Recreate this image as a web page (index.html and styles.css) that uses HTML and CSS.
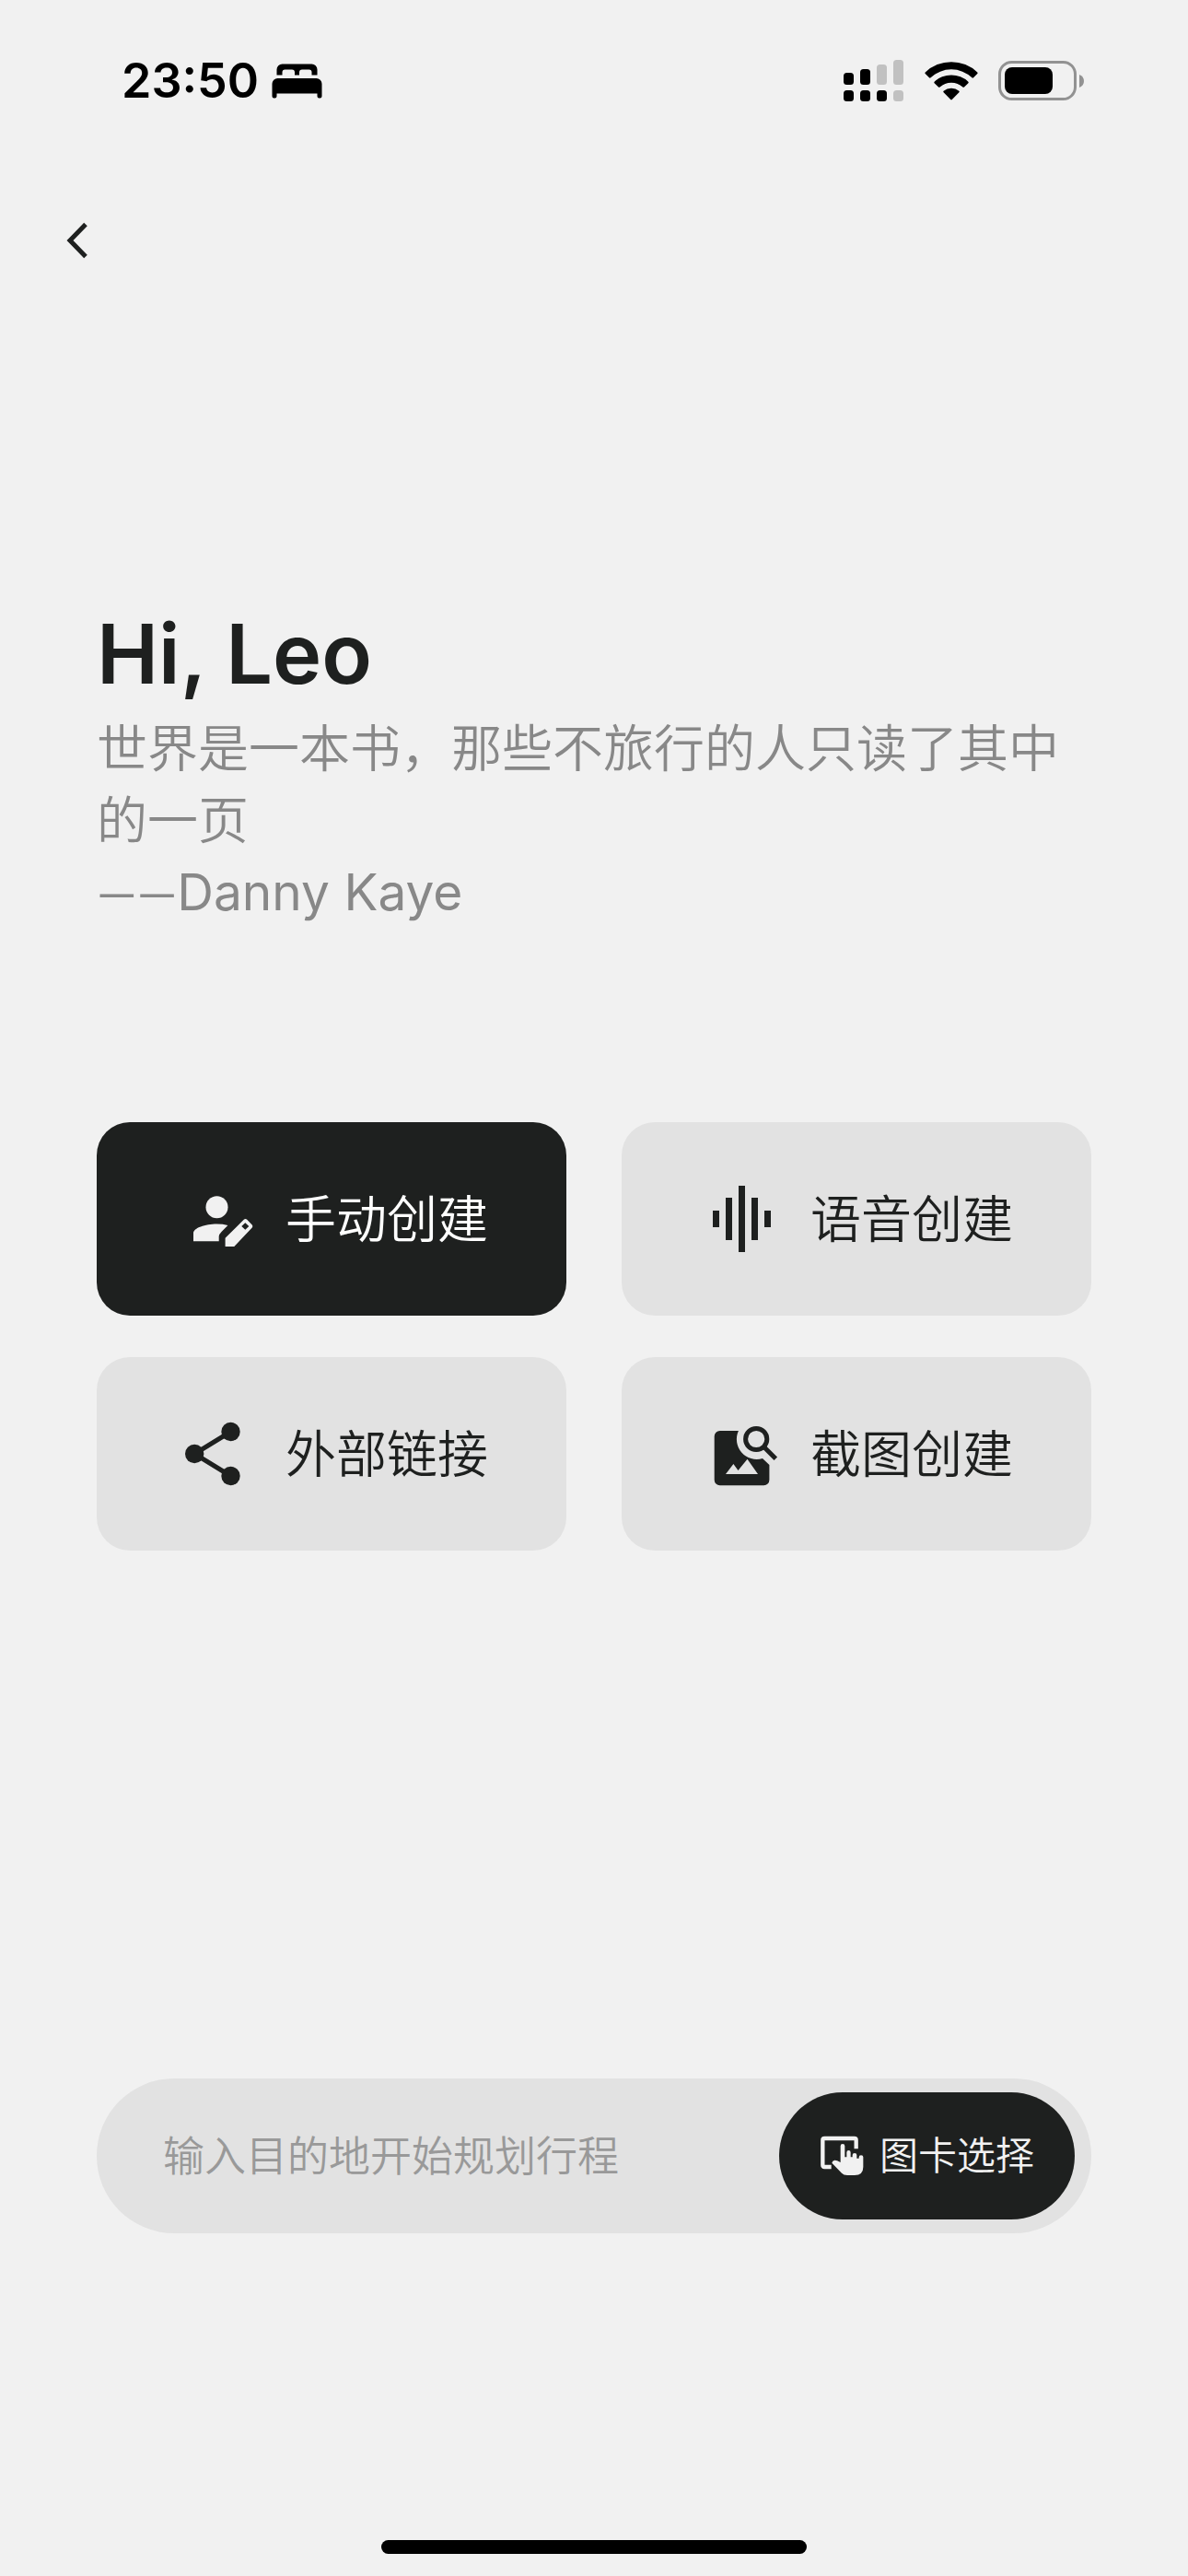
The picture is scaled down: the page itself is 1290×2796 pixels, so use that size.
FILE: index.html
```html
<!DOCTYPE html>
<html lang="zh-CN">
<head>
    <meta charset="UTF-8">
    <meta name="viewport" content="width=device-width, initial-scale=1.0">
    <title>创建行程</title>
    <link rel="stylesheet" href="styles.css">
</head>
<body>
    <div class="wrap">
        <header class="statusBar">
            <div class="statusLeft">
                <span class="time">23:50</span>
                <svg class="bedIcon" viewBox="0 0 56 38" aria-hidden="true">
                    <path d="M5.5 12.5V6.5a6 6 0 0 1 6-6H43.5a6 6 0 0 1 6 6V12.5H43.5V9.5a3 3 0 0 0-3-3H33a3 3 0 0 0-3 3V12.5H25V9.5a3 3 0 0 0-3-3H14.5a3 3 0 0 0-3 3V12.5Z"/>
                    <path d="M.5 22a6 6 0 0 1 6-6H48.5a6 6 0 0 1 6 6V35.5a2 2 0 0 1-2 2H51.5a2 2 0 0 1-2-2V32.5H5.5V35.5a2 2 0 0 1-2 2H2.5a2 2 0 0 1-2-2Z"/>
                </svg>
            </div>
            <div class="statusRight">
                <svg class="signalIcon" viewBox="0 0 66 46" aria-hidden="true">
                    <rect x="0" y="14" width="11" height="13" rx="3.5"/>
                    <rect x="18" y="10" width="11" height="17" rx="3.5"/>
                    <rect class="off" x="36" y="5" width="11" height="22" rx="3.5"/>
                    <rect class="off" x="54" y="0" width="11" height="27" rx="3.5"/>
                    <rect x="0" y="33" width="11" height="12" rx="3.5"/>
                    <rect x="18" y="33" width="11" height="12" rx="3.5"/>
                    <rect x="36" y="33" width="11" height="12" rx="3.5"/>
                    <rect class="off" x="54" y="33" width="11" height="12" rx="3.5"/>
                </svg>
                <svg class="wifiIcon" viewBox="0 0 58 42" aria-hidden="true">
                    <path d="M.7 11.5a41 41 0 0 1 56.6 0q.7.8 0 1.5l-4.3 4.3q-.8.7-1.6 0a32.5 32.5 0 0 0-44.8 0q-.8.7-1.6 0L.7 13q-.7-.7 0-1.5Z"/>
                    <path d="M10.6 21.7a27 27 0 0 1 36.8 0q.7.8 0 1.5l-4.4 4.3q-.8.7-1.6 0a18.5 18.5 0 0 0-24.8 0q-.8.7-1.6 0l-4.4-4.3q-.7-.7 0-1.5Z"/>
                    <path d="M20.6 31.7a13.5 13.5 0 0 1 16.8 0q.8.8 0 1.6l-7.6 7.8q-.8.7-1.6 0l-7.6-7.8q-.8-.8 0-1.6Z"/>
                </svg>
                <svg class="batteryIcon" viewBox="0 0 94 44" aria-hidden="true">
                    <rect class="shell" x="1.5" y="1.5" width="82" height="40" rx="13"/>
                    <rect x="7" y="7" width="52" height="29" rx="8"/>
                    <path class="tip" d="M88 15q5 2 5 7t-5 7Z"/>
                </svg>
            </div>
        </header>

        <nav class="topNav">
            <button type="button" class="backBtn" aria-label="返回">
                <svg viewBox="0 0 24 40" aria-hidden="true"><path d="M21 2.5L4 20L21 37.5"/></svg>
            </button>
        </nav>

        <main>
            <h1>Hi, Leo</h1>
            <p class="quote">世界是一本书，那些不旅行的人只读了其中的一页<br><span class="author"><span class="dash">——</span>Danny Kaye</span></p>

            <div class="cardBox">
                <button type="button" class="card active">
                    <svg viewBox="0 0 88 88" aria-hidden="true">
                        <circle cx="45.5" cy="31.2" r="12"/>
                        <path d="M20 68.3V59.5C20 54 33 49.6 45.3 49.6Q52 49.6 57.4 51L50.5 58Q48 60.5 47.7 63V68.3Z"/>
                        <path fill-rule="evenodd" d="M54.6 74V64.8L74.8 44.7Q76.5 43.3 78.2 44.7L83.5 50.3Q85 52 83.5 53.8L64.3 74ZM72.3 52L76.3 55.8L80.3 52L76.3 48.2Z"/>
                    </svg>
                    <span>手动创建</span>
                </button>
                <button type="button" class="card">
                    <svg viewBox="0 0 88 88" aria-hidden="true">
                        <path d="M14 35h7v18h-7ZM28 21h7v46h-7ZM42 8h7v72h-7ZM56 21h7v46h-7ZM70 35h7v18h-7Z"/>
                    </svg>
                    <span>语音创建</span>
                </button>
                <button type="button" class="card">
                    <svg viewBox="0 0 88 88" aria-hidden="true">
                        <path class="line" d="M60.5 20L21.2 44L60.5 68"/>
                        <circle cx="60.5" cy="20" r="10.2"/>
                        <circle cx="21.2" cy="44" r="10.2"/>
                        <circle cx="60.5" cy="68" r="10.2"/>
                    </svg>
                    <span>外部链接</span>
                </button>
                <button type="button" class="card">
                    <svg viewBox="0 0 88 88" aria-hidden="true">
                        <path fill-rule="evenodd" d="M41.9 19A21.8 21.8 0 0 0 68 49L75.4 56V72.3a6 6 0 0 1-6 6H21.7a6 6 0 0 1-6-6V25a6 6 0 0 1 6-6ZM28 66H63L51.5 49.7L41.5 62L36.4 55Z"/>
                        <circle class="line" cx="61.2" cy="28" r="11.6"/>
                        <path class="line" d="M69 36L82.3 49.3"/>
                    </svg>
                    <span>截图创建</span>
                </button>
            </div>

            <form class="searchBox" method="GET" action="#">
                <input type="text" name="place" placeholder="输入目的地开始规划行程" aria-label="目的地">
                <button type="button" class="pickBtn">
                    <svg viewBox="212 234 144 144" aria-hidden="true">
                        <path class="frame" d="M331 283V255Q331 249 325 249H228Q222 249 222 255V336Q222 342 228 342H250"/>
                        <path d="M280 274Q280 267 287 267T294 274V310H300V295Q300 288 306.5 288T313 295V310H319V303Q319 297 326 297T333 303V314H340V310Q340 304 347 304T354 310V342Q354 369 326 369H302Q290 369 284 362L252 329Q253 321 261 320Q266 319 280 327Z"/>
                    </svg>
                    <span>图卡选择</span>
                </button>
            </form>
        </main>

        <div class="homeBar"></div>
    </div>
</body>
</html>
```
FILE: styles.css
```css
*{ margin: 0; padding: 0; box-sizing: border-box; }
body{ background: #f1f1f1; color: #1e201f; font-family: Inter, "Noto Sans CJK SC", sans-serif; }
button{ border: none; background: none; color: inherit; font-family: inherit; cursor: pointer; }
svg{ display: block; flex: none; fill: currentColor; }
.wrap{ min-height: 100vh; display: flex; flex-direction: column; }

/* 状态栏 */
.statusBar{ display: flex; justify-content: space-between; align-items: center; padding: 56px 112px 0 132px; color: #000; }
.statusLeft{ display: flex; align-items: center; gap: 14px; }
.statusRight{ display: flex; align-items: center; gap: 22px; }
.time{ font-size: 52px; line-height: 64px; font-weight: 600; }
.bedIcon{ width: 56px; height: 38px; }
.signalIcon{ width: 66px; height: 46px; }
.wifiIcon{ width: 58px; height: 42px; }
.batteryIcon{ width: 94px; height: 44px; }
.off{ fill: #c1c1c1; }
.shell{ fill: none; stroke: #929292; stroke-width: 3; }
.tip{ fill: #929292; }

.topNav{ padding: 105px 56px 0; }
.backBtn{ display: block; padding: 16px; }
.backBtn svg{ width: 24px; height: 40px; fill: none; stroke: currentColor; stroke-width: 5; }

main{ padding: 359px 105px 0; }
h1{ font-size: 90px; line-height: 108px; font-weight: 600; margin-bottom: 9px; }
.quote{ font-size: 55px; line-height: 78px; font-weight: 350; color: #888; }
.author{ font-weight: 400; }
.dash{ font-family: Lato, sans-serif; line-height: 1; }

.cardBox{ display: grid; grid-template-columns: 1fr 1fr; gap: 45px 60px; margin-top: 211px; }
.card{ display: flex; align-items: center; justify-content: center; gap: 32px; height: 210px; border-radius: 36px; background: #e2e2e2; font-size: 55px; line-height: 66px; font-weight: 350; }
.card.active{ background: #1e201f; color: #fff; }
.card svg{ width: 88px; height: 88px; }
.card.active svg{ fill: #f1f1f1; }
.line{ fill: none; stroke: currentColor; stroke-width: 5; }

.searchBox{ display: flex; align-items: center; height: 168px; margin-top: 573px; padding: 15px 18px 15px 72px; border-radius: 84px; background: #e2e2e2; }
.searchBox input{ flex: 1; min-width: 0; height: 100%; border: none; outline: none; background: none; color: inherit; font-family: inherit; font-size: 45px; font-weight: 350; }
.searchBox input::placeholder{ color: #999; opacity: 1; }
.pickBtn{ display: flex; align-items: center; justify-content: center; gap: 17px; height: 138px; padding: 0 44px; border-radius: 69px; background: #1e201f; color: #f1f1f1; font-size: 42px; line-height: 54px; font-weight: 350; }
.pickBtn svg{ width: 48px; height: 48px; }
.frame{ fill: none; stroke: currentColor; stroke-width: 13; }

.homeBar{ width: 462px; height: 15px; margin: auto auto 24px; border-radius: 8px; background: #000; }
```
